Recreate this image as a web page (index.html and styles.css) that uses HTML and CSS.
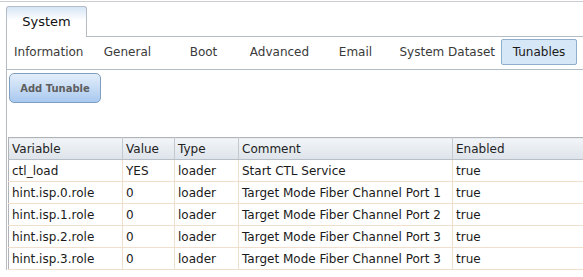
FILE: index.html
```html
<!DOCTYPE html>
<html lang="en">
<head>
  <meta charset="UTF-8">
  <title>System - Tunables</title>
  <link rel="stylesheet" href="styles.css">
</head>
<body>
  <div class="frame">
    <div class="tabstrip">
      <div class="tab active">System</div>
    </div>

    <div class="pane">
      <ul class="subtabs">
        <li>Information</li>
        <li>General</li>
        <li>Boot</li>
        <li>Advanced</li>
        <li>Email</li>
        <li>System Dataset</li>
        <li class="selected">Tunables</li>
      </ul>

      <div class="toolbar">
        <button class="btn-add">Add Tunable</button>
      </div>

      <table class="grid">
        <colgroup>
          <col class="c-var">
          <col class="c-val">
          <col class="c-type">
          <col class="c-comment">
          <col class="c-enabled">
        </colgroup>
        <thead>
          <tr>
            <th>Variable</th>
            <th>Value</th>
            <th>Type</th>
            <th>Comment</th>
            <th>Enabled</th>
          </tr>
        </thead>
        <tbody>
          <tr><td>ctl_load</td><td>YES</td><td>loader</td><td>Start CTL Service</td><td>true</td></tr>
          <tr><td>hint.isp.0.role</td><td>0</td><td>loader</td><td>Target Mode Fiber Channel Port 1</td><td>true</td></tr>
          <tr><td>hint.isp.1.role</td><td>0</td><td>loader</td><td>Target Mode Fiber Channel Port 2</td><td>true</td></tr>
          <tr><td>hint.isp.2.role</td><td>0</td><td>loader</td><td>Target Mode Fiber Channel Port 3</td><td>true</td></tr>
          <tr><td>hint.isp.3.role</td><td>0</td><td>loader</td><td>Target Mode Fiber Channel Port 3</td><td>true</td></tr>
        </tbody>
      </table>
    </div>
  </div>
</body>
</html>
```

FILE: styles.css
```css
body {
  margin: 0;
  font-family: 'DejaVu Sans', Verdana, sans-serif;
  font-size: 12px;
  color: #1e1e1e;
  background-color: #fff;
  overflow: hidden;
}

.frame {
  margin-top: 1px;
  border-top: 1px solid #c9ccd0;
  padding-top: 4px;
}

.tabstrip {
  display: flex;
  padding-left: 6px;
}

.tab {
  width: 81px;
  height: 31px;
  box-sizing: border-box;
  border: 1px solid #b4bcc6;
  border-bottom: none;
  border-radius: 3px 3px 0 0;
  background: linear-gradient(#d6e5f6, #ffffff 45%);
  text-align: center;
  line-height: 30px;
  font-size: 13px;
  color: #111;
  margin-bottom: -1px;
  position: relative;
}

.pane {
  margin-left: 6px;
  border-left: 1px solid #b4bcc6;
  border-top: 1px solid #b4bcc6;
  overflow: hidden;
}

.subtabs {
  list-style: none;
  display: flex;
  margin: 0;
  padding: 2px 0 0 1px;
  height: 30px;
  border-bottom: 1px solid #b4bcc6;
}

.subtabs li {
  min-width: 76px;
  height: 26px;
  box-sizing: border-box;
  padding: 0 5px;
  border: 1px solid transparent;
  text-align: center;
  line-height: 24px;
  color: #3a3a3a;
  font-size: 12px;
}

.subtabs li.selected {
  background-color: #d6e7f8;
  border-color: #8eaecb;
  border-radius: 2px;
  color: #1a1a1a;
}

.toolbar {
  padding: 3px 0 0 2px;
  height: 32px;
}

.btn-add {
  width: 92px;
  height: 30px;
  border: 1px solid #7f9fc2;
  border-radius: 5px;
  background: linear-gradient(#e4eefa, #a9c9ef);
  font-family: 'DejaVu Sans', Verdana, sans-serif;
  font-size: 10px;
  font-weight: bold;
  color: #5e5e5e;
  padding: 0;
}

.grid {
  margin: 32px 0 0 1px;
  width: 575px;
  table-layout: fixed;
  border-collapse: collapse;
  border-top: 1px solid #b0b4b9;
  border-left: 1px solid #b0b4b9;
}

.c-var { width: 114px; }
.c-val { width: 52px; }
.c-type { width: 64px; }
.c-comment { width: 214px; }

.grid th {
  height: 21px;
  padding: 0 3px;
  text-align: left;
  font-weight: normal;
  color: #222;
  background: linear-gradient(#f2f5f8, #dde3ea);
  border-right: 1px solid #c3c9d0;
  border-bottom: 1px solid #b8bec6;
  white-space: nowrap;
}

.grid td {
  height: 21px;
  padding: 0 3px;
  border-right: 1px solid #f0dfcd;
  border-bottom: 1px solid #f0dfcd;
  white-space: nowrap;
  overflow: hidden;
  color: #1a1a1a;
}

.grid th:last-child,
.grid td:last-child {
  border-right: none;
}
```
